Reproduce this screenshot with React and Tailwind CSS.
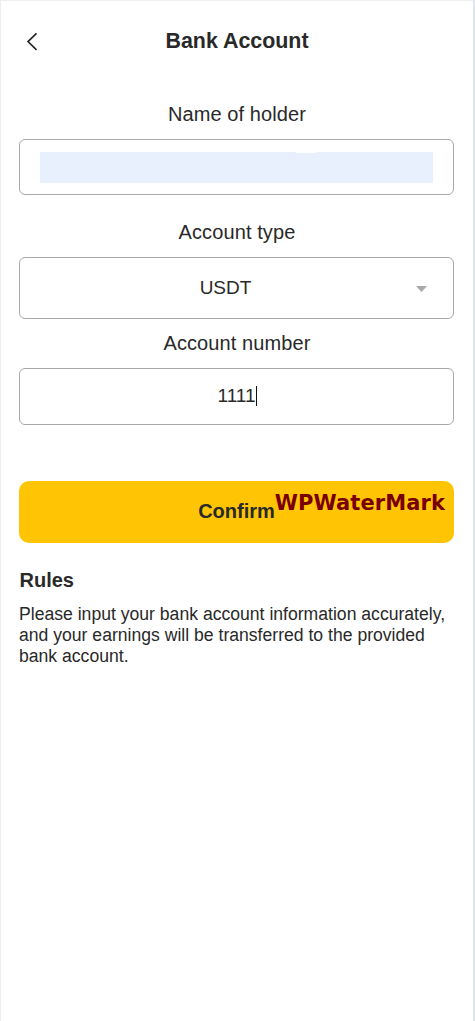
function Field({ label, labelClass, boxClass, children }) {
  return (
    <div>
      <p className={`pl-px text-center text-[20px] leading-6 ${labelClass}`}>{label}</p>
      <div className={`flex items-center rounded-md border border-[#a9a9a9] px-5 ${boxClass}`}>{children}</div>
    </div>
  );
}

export default function App() {
  return (
    <main className="min-h-[1021px] w-full border-t border-r-2 border-l border-t-[#efefef] border-r-[#e0e4ec] border-l-[#efefef] bg-white pr-[19px] pl-[18px] font-['Liberation_Sans',Arial,sans-serif] text-[#292929]">
      <header className="grid h-20 grid-cols-[28px_1fr_28px] items-center">
        <button type="button" aria-label="Back" className="flex h-8 items-center">
          <svg width="26" height="20" viewBox="0 0 26 20" fill="none" stroke="#222" strokeWidth="1.6">
            <path d="M17.5 2.4 9 10.6l8.5 8.2" />
          </svg>
        </button>
        <h1 className="pl-px text-center text-[21.4px] leading-6 font-bold">Bank Account</h1>
      </header>

      <Field label="Name of holder" labelClass="mt-[21px] tracking-[0.1px]" boxClass="mt-[13px] h-[56px]">
        <div className="h-[31px] w-full bg-[#e8effd] pl-[256px]">
          <div className="h-px w-5 rounded-b bg-white" />
        </div>
      </Field>

      <Field label="Account type" labelClass="mt-[25px] tracking-[0.1px]" boxClass="mt-[13px] h-[62px]">
        <span className="w-full pr-[5px] text-center text-[19px] leading-6">USDT</span>
        <svg className="mt-[2px] mr-[6px] shrink-0" width="11" height="6" viewBox="0 0 11 6" fill="#a9a9a9">
          <path d="M0 0h11L5.5 6z" />
        </svg>
      </Field>

      <Field label="Account number" labelClass="mt-[12px] tracking-[0.1px]" boxClass="mt-[13px] h-[57px]">
        <div className="flex w-full items-center justify-center pb-[2px] pl-px text-[19px] leading-6">
          <span>1111</span>
          <span className="h-5 w-px bg-[#111]" />
        </div>
      </Field>

      <div className="relative mt-[56px]">
        <button
          type="button"
          className="h-[62px] w-full rounded-[10px] bg-[#ffc505] pb-[2px] text-[20px] leading-6 font-bold"
        >
          Confirm
        </button>
        <span className="absolute top-[8px] right-[9px] font-['DejaVu_Sans',sans-serif] text-[21px] leading-7 font-bold tracking-[0.1px] text-[#790000]">
          WPWaterMark
        </span>
      </div>

      <section className="mt-[25px]">
        <h2 className="pl-[0.5px] text-[20px] leading-6 font-bold">Rules</h2>
        <p className="mt-[12px] text-[17.6px] leading-[21px] whitespace-nowrap">
          Please input your bank account information accurately,
          <br />
          and your earnings will be transferred to the provided
          <br />
          bank account.
        </p>
      </section>
    </main>
  );
}
